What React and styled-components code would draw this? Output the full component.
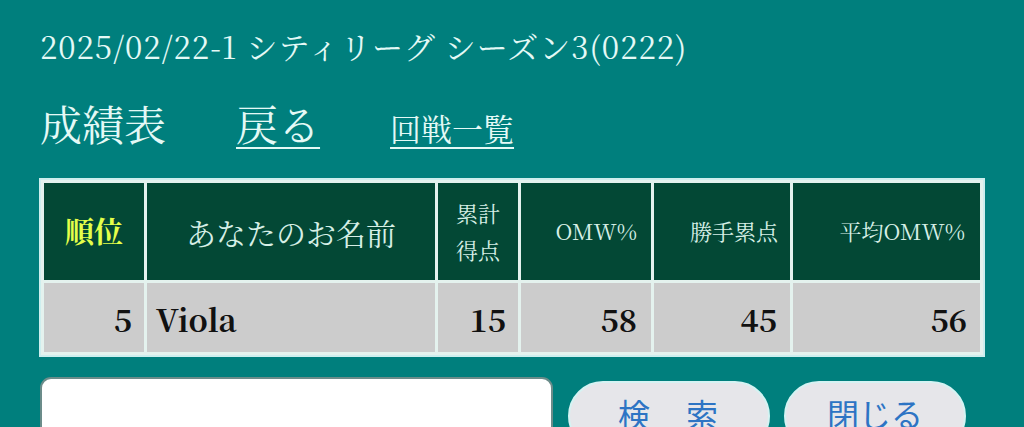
import React from "react";
import styled, { createGlobalStyle } from "styled-components";

const Global = createGlobalStyle`
  html, body { margin: 0; padding: 0; background: #007f7d; }
  body { font-family: "Noto Serif CJK JP", "Liberation Serif", "Noto Sans CJK JP", serif; }
`;

const Page = styled.div`
  width: 1024px;
  height: 427px;
  overflow: hidden;
  background: #007f7d;
  box-sizing: border-box;
  padding: 25px 0 0 40px;
  color: #eefaf8;
`;

const Title = styled.h1`
  margin: 0;
  font-size: 31px;
  font-weight: 400;
  line-height: 42px;
  letter-spacing: 1px;
  color: #e4f9f6;
  white-space: nowrap;
`;

const NavBar = styled.div`
  display: flex;
  align-items: baseline;
  margin-top: 26px;
  height: 56px;
`;

const Heading = styled.span`
  font-size: 42px;
  line-height: 52px;
  margin-right: 70px;
  color: #e4f9f6;
`;

const NavLink = styled.a`
  font-size: ${(p) => p.$size}px;
  color: #e4f9f6;
  text-decoration: underline;
  text-decoration-thickness: 2px;
  text-underline-offset: 6px;
  margin-right: ${(p) => p.$gap || 0}px;
  cursor: pointer;
`;

const Table = styled.table`
  margin: 29px 0 0 -1px;
  border: 2px solid #cdeeee;
  border-collapse: separate;
  border-spacing: 3px;
  background: #e4f2ee;
  width: 946px;
  table-layout: fixed;
`;

const HeadCell = styled.th`
  background: #034835;
  height: 97px;
  padding: 0 ${(p) => p.$pad || 0}px 0 0;
  font-weight: ${(p) => (p.$bold ? 700 : 400)};
  font-size: ${(p) => p.$size}px;
  line-height: ${(p) => p.$lh || 1.2};
  color: ${(p) => (p.$accent ? "#e4ff4a" : "#d6efe6")};
  text-align: ${(p) => p.$align || "center"};
`;

const DataCell = styled.td`
  background: #cccccc;
  height: 67px;
  padding: 2px ${(p) => p.$pr || 0}px 0 ${(p) => p.$pl || 0}px;
  font-weight: 700;
  font-size: 31px;
  color: #111;
  text-align: ${(p) => p.$align || "right"};
`;

const SearchRow = styled.div`
  display: flex;
  align-items: flex-start;
  margin-top: 20px;
`;

const SearchInput = styled.input`
  width: 513px;
  height: 70px;
  box-sizing: border-box;
  border: 2px solid #6b8c8a;
  border-radius: 11px;
  background: #ffffff;
  outline: none;
  flex: none;
`;

const PillButton = styled.button`
  width: ${(p) => p.$w}px;
  height: 70px;
  margin-top: 4px;
  margin-left: ${(p) => p.$ml}px;
  border: 2px solid #d5f3f3;
  border-radius: 35px;
  background: #e6e6ea;
  color: #2d74c4;
  font-family: "Noto Sans CJK JP", "Noto Sans", sans-serif;
  font-size: 32px;
  line-height: 40px;
  padding: 10px 0 0;
  display: flex;
  justify-content: center;
  align-items: flex-start;
  white-space: pre;
  letter-spacing: ${(p) => p.$ls || 0}px;
`;

export default function App() {
  return (
    <>
      <Global />
      <Page>
        <Title>2025/02/22-1 シティリーグ シーズン3(0222)</Title>
        <NavBar>
          <Heading>成績表</Heading>
          <NavLink $size={42} $gap={70}>戻る</NavLink>
          <NavLink $size={31}>回戦一覧</NavLink>
        </NavBar>
        <Table>
          <colgroup>
            <col style={{ width: "100px" }} />
            <col style={{ width: "288px" }} />
            <col style={{ width: "80px" }} />
            <col style={{ width: "130px" }} />
            <col style={{ width: "136px" }} />
            <col style={{ width: "187px" }} />
          </colgroup>
          <thead>
            <tr>
              <HeadCell $accent $bold $size={29}>順位</HeadCell>
              <HeadCell $size={30}>あなたのお名前</HeadCell>
              <HeadCell $size={22} $lh={1.65}>累計<br />得点</HeadCell>
              <HeadCell $size={22} $align="right" $pad={14}>OMW%</HeadCell>
              <HeadCell $size={22} $align="right" $pad={12}>勝手累点</HeadCell>
              <HeadCell $size={22} $align="right" $pad={15}>平均OMW%</HeadCell>
            </tr>
          </thead>
          <tbody>
            <tr>
              <DataCell $pr={12}>5</DataCell>
              <DataCell $align="left" $pl={9}>Viola</DataCell>
              <DataCell $pr={12}>15</DataCell>
              <DataCell $pr={14}>58</DataCell>
              <DataCell $pr={13}>45</DataCell>
              <DataCell $pr={13}>56</DataCell>
            </tr>
          </tbody>
        </Table>
        <SearchRow>
          <SearchInput />
          <PillButton $w={202} $ml={15} $ls={2}>検　索</PillButton>
          <PillButton $w={182} $ml={14}>閉じる</PillButton>
        </SearchRow>
      </Page>
    </>
  );
}
